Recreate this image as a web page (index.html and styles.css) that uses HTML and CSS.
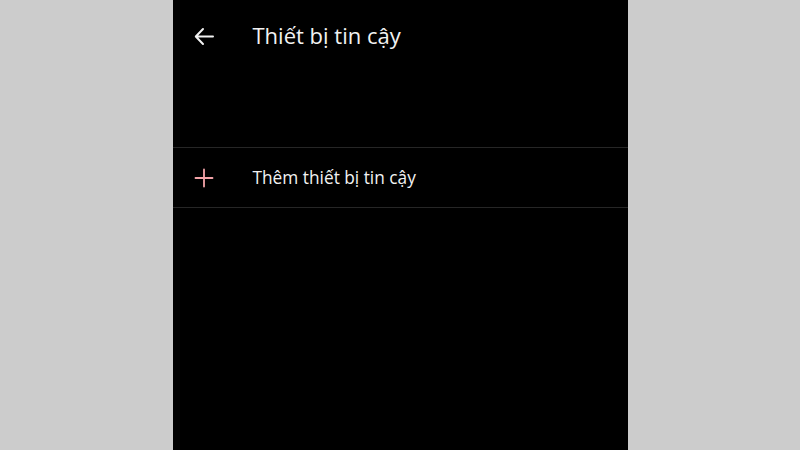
FILE: index.html
```html
<!DOCTYPE html>
<html lang="vi">
<head>
<meta charset="utf-8">
<link rel="stylesheet" href="styles.css">
</head>
<body>
<div class="screen">
  <header class="top">
    <span class="icon">
      <svg width="20" height="20" viewBox="0 0 20 20"><path d="M19 10.5H2M9 3L1.8 10.5L9 18" fill="none" stroke="#f2f2f2" stroke-width="2" stroke-linecap="round" stroke-linejoin="round"/></svg>
    </span>
    <h1 class="title">Thiết bị tin cậy</h1>
  </header>
  <div class="list">
    <div class="row">
      <span class="icon">
        <svg width="20" height="20" viewBox="0 0 20 20"><path d="M10 1.5V18.5M1.5 10H18.5" fill="none" stroke="#f3a3a8" stroke-width="1.8" stroke-linecap="round"/></svg>
      </span>
      <span class="label">Thêm thiết bị tin cậy</span>
    </div>
  </div>
</div>
</body>
</html>
```
FILE: styles.css
```css
html, body {
  margin: 0;
  padding: 0;
  background: #cccccc;
  font-family: "Open Sans", "Noto Sans", sans-serif;
}
.screen {
  width: 455px;
  height: 450px;
  margin: 0 auto;
  background: #000;
  color: #f2f2f2;
  display: flex;
  flex-direction: column;
}
.top {
  height: 72px;
  display: flex;
  align-items: center;
  padding-left: 21px;
}
.icon {
  width: 20px;
  height: 20px;
  display: flex;
  flex: none;
}
.title {
  margin: 0 0 3px 39px;
  font-size: 22px;
  font-weight: 400;
  letter-spacing: 0;
}
.list {
  margin-top: 75px;
  border-top: 1px solid #262626;
  border-bottom: 1px solid #262626;
}
.row {
  height: 59px;
  display: flex;
  align-items: center;
  padding-left: 21px;
}
.label {
  margin-left: 39px;
  font-size: 17.3px;
}
```
